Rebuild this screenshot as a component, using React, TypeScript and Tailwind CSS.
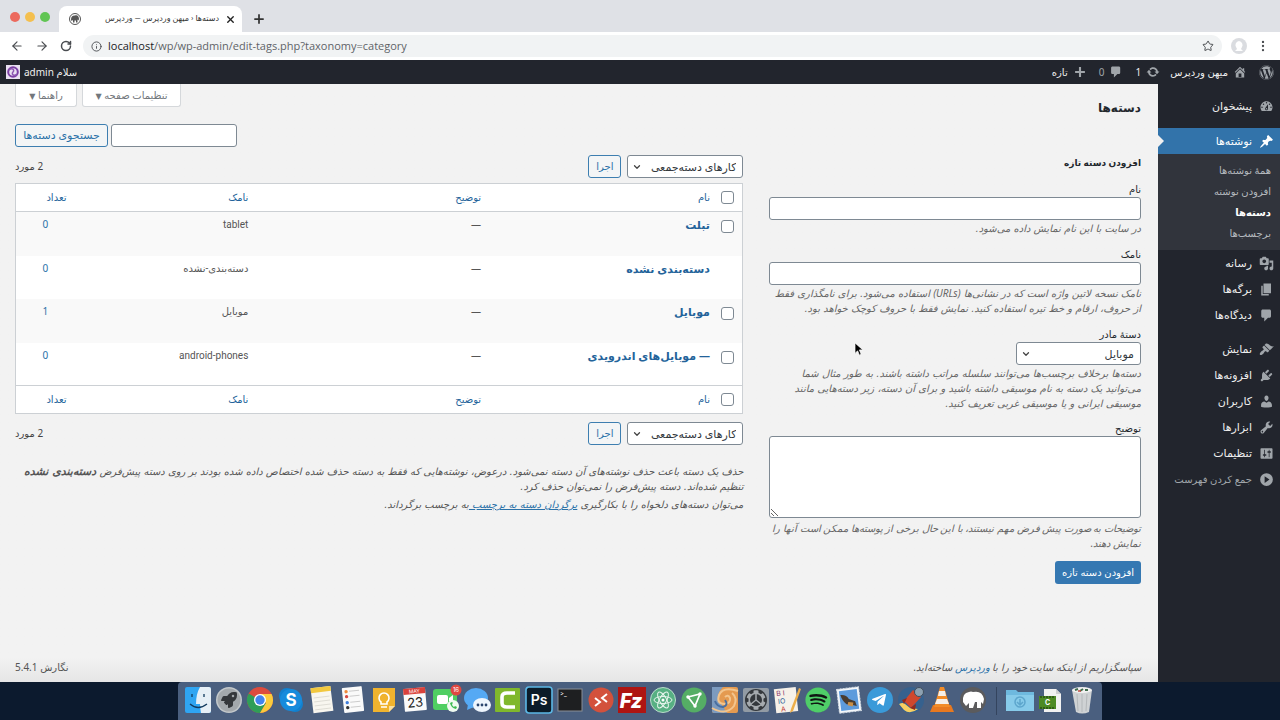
import React, { useState } from 'react';
import { ArrowLeft, ArrowRight, ChevronDown, Info, MoreVertical, Plus, RotateCw, Star, X } from 'lucide-react';
import { FaCog, FaRocket, FaSpotify, FaTelegramPlane, FaWordpress } from 'react-icons/fa';

const icons = {
  home: 'M16 8.5l1.53 1.53-1.06 1.06L10 4.6l-6.47 6.49-1.06-1.06L10 2.5l4 4v-2h2v4zm-6-2.46l6 5.99V18H4v-5.97zM12 17v-5H8v5h4z',
  update: 'M10.2 3.28c3.53 0 6.43 2.61 6.92 6h2.08l-3.5 4-3.5-4h2.32c-.45-1.97-2.21-3.45-4.32-3.45-1.45 0-2.73.71-3.54 1.78L4.95 5.66C6.23 4.2 8.11 3.28 10.2 3.28zm-.4 13.44c-3.52 0-6.43-2.61-6.92-6H.8l3.5-4c1.17 1.33 2.33 2.67 3.5 4H5.48c.45 1.97 2.21 3.45 4.32 3.45 1.45 0 2.73-.71 3.54-1.78l1.71 1.95c-1.28 1.46-3.15 2.38-5.25 2.38z',
  comments: 'M5 2h9c1.1 0 2 .9 2 2v7c0 1.1-.9 2-2 2h-2l-5 5v-5H5c-1.1 0-2-.9-2-2V4c0-1.1.9-2 2-2z',
  plus: 'M17 8.5v3h-5.5V17h-3v-5.500H3v-3h5.500V3h3v5.500H17z',
  dashboard: 'M3.76 16h12.48c1.1-1.37 1.76-3.11 1.76-5 0-4.42-3.58-8-8-8s-8 3.58-8 8c0 1.89.66 3.63 1.76 5zM10 4c.55 0 1 .45 1 1s-.45 1-1 1-1-.45-1-1 .45-1 1-1zM6 6c.55 0 1 .45 1 1s-.45 1-1 1-1-.45-1-1 .45-1 1-1zm8 0c.55 0 1 .45 1 1s-.45 1-1 1-1-.45-1-1 .45-1 1-1zm-5.370 5.550L12 7v6c0 1.1-.9 2-2 2s-2-.9-2-2c0-.57.24-1.080.63-1.450zM4 10c.55 0 1 .45 1 1s-.45 1-1 1-1-.45-1-1 .45-1 1-1zm12 0c.55 0 1 .45 1 1s-.45 1-1 1-1-.45-1-1 .45-1 1-1zm-5 3c0-.55-.45-1-1-1s-1 .45-1 1 .45 1 1 1 1-.45 1-1z',
  post: 'M10.44 3.02l1.82-1.82 6.36 6.35-1.83 1.82c-1.05-.68-2.48-.57-3.41.36l-.75.75c-.92.93-1.04 2.35-.35 3.41l-1.83 1.82-2.41-2.41-2.8 2.79c-.42.42-3.38 2.71-3.8 2.29s1.86-3.39 2.28-3.81l2.79-2.79L4.1 9.36l1.83-1.82c1.05.69 2.48.57 3.4-.36l.75-.75c.93-.92 1.05-2.35.36-3.41z',
  media: 'M13 11V4c0-.55-.45-1-1-1h-1.67L9 1H5L3.67 3H2c-.55 0-1 .45-1 1v7c0 .55.45 1 1 1h10c.55 0 1-.45 1-1zM7 4.5c1.38 0 2.5 1.12 2.5 2.5S8.38 9.5 7 9.5 4.5 8.38 4.5 7 5.62 4.5 7 4.5zM14 6h5v10.5c0 1.38-1.12 2.5-2.5 2.5S14 17.88 14 16.5s1.12-2.5 2.5-2.5c.17 0 .34.02.5.05V9h-3V6zm-4 8.05V13h2v3.5c0 1.38-1.12 2.5-2.5 2.5S7 17.88 7 16.5 8.12 14 9.5 14c.17 0 .34.02.5.05z',
  page: 'M6 15V2h10v13H6zm-1 1h8v2H3V5h2v11z',
  appearance: 'M14.48 11.06L7.41 3.99l1.5-1.5c.5-.56 2.3-.47 3.51.32 1.21.8 1.43 1.28 2.91 2.1 1.18.64 2.45 1.26 4.45.85zm-.71.71L6.7 4.7 4.93 6.47c-.39.39-.39 1.02 0 1.41l1.06 1.06c.39.39.39 1.03 0 1.42-.6.6-1.43 1.11-2.21 1.69-.35.26-.7.53-1.01.84C1.43 14.23.4 16.08 1.4 17.07c.99 1 2.84-.03 4.18-1.36.31-.31.58-.66.85-1.02.57-.78 1.08-1.61 1.69-2.21.39-.39 1.02-.39 1.41 0l1.06 1.06c.39.39 1.02.39 1.41 0z',
  plugins: 'M13.11 4.36L9.87 7.6 8 5.73l3.24-3.24c.35-.34 1.05-.2 1.56.32.52.51.66 1.21.31 1.55zm-8 1.77l.91-1.12 9.01 9.01-1.19.84c-.71.71-2.63 1.16-3.82 1.16H6.14L4.9 17.26c-.59.59-1.54.59-2.12 0-.59-.58-.59-1.53 0-2.12l1.24-1.24v-3.88c0-1.13.4-3.19 1.09-3.89zm7.26 3.97l3.24-3.24c.34-.35 1.04-.21 1.55.31.52.51.66 1.21.31 1.55l-3.24 3.25z',
  users: 'M10 9.25c-2.27 0-2.73-3.44-2.73-3.44C7 4.02 7.82 2 9.97 2c2.16 0 2.98 2.02 2.71 3.81 0 0-.41 3.44-2.68 3.44zm0 2.57L12.72 10c2.39 0 4.52 2.33 4.52 4.53v2.49s-3.65 1.13-7.24 1.13c-3.65 0-7.24-1.13-7.24-1.13v-2.49c0-2.25 1.94-4.48 4.47-4.48z',
  tools: 'M16.68 9.77c-1.34 1.34-3.3 1.67-4.95.99l-5.41 6.52c-.99.99-2.59.99-3.58 0s-.99-2.59 0-3.57l6.52-5.42c-.68-1.65-.35-3.61.99-4.95 1.28-1.28 3.12-1.62 4.72-1.06l-2.89 2.89 2.82 2.82 2.86-2.87c.53 1.58.18 3.39-1.08 4.65zM3.81 16.21c.4.39 1.04.39 1.43 0 .4-.4.4-1.04 0-1.43-.39-.4-1.03-.4-1.43 0-.39.39-.39 1.03 0 1.43z',
  settings: 'M18 16V4c0-.55-.45-1-1-1H3c-.55 0-1 .45-1 1v12c0 .55.45 1 1 1h14c.55 0 1-.45 1-1zM8 11h1c.55 0 1 .45 1 1s-.45 1-1 1H8v1.5c0 .28-.22.5-.5.5s-.5-.22-.5-.5V13H6c-.55 0-1-.45-1-1s.45-1 1-1h1V5.5c0-.28.22-.5.5-.5s.5.22.5.5V11zm5-2h-1c-.55 0-1-.45-1-1s.45-1 1-1h1V5.5c0-.28.22-.5.5-.5s.5.22.5.5V7h1c.55 0 1 .45 1 1s-.45 1-1 1h-1v5.5c0 .28-.22.5-.5.5s-.5-.22-.5-.5V9z',
  collapse: 'M10 1.500a8.500 8.500 0 1 0 0 17 8.500 8.500 0 0 0 0-17zM7.500 5.500L14 10l-6.500 4.500z',
};

type IconName = keyof typeof icons;

const Dashicon = ({ name, className = 'size-[15px]' }: { name: IconName; className?: string }) => (
  <svg viewBox="0 0 20 20" className={`shrink-0 fill-current ${className}`} aria-hidden="true">
    <path fillRule="evenodd" d={icons[name]} />
  </svg>
);

const MenuItem = ({ icon, label }: { icon: IconName; label: string }) => (
  <li>
    <a href="#" className="flex h-[26px] items-center gap-[7px] ps-[6px] text-[11px] text-[#eee]">
      <Dashicon name={icon} className="size-[15px] text-[#a0a5aa]" />
      {label}
    </a>
  </li>
);

const Sidebar = () => (
  <nav className="w-[122px] shrink-0 bg-[#22252d] pt-[9px]">
    <ul>
      <MenuItem icon="dashboard" label="پیشخوان" />
      <li className="mt-[9px]">
        <a href="#" className="relative flex h-[26px] items-center gap-[7px] bg-[#3273aa] ps-[6px] text-[11px] text-white">
          <Dashicon name="post" />
          نوشته‌ها
          <span className="absolute left-0 top-[7px] border-y-6 border-l-6 border-y-transparent border-l-[#f1f1f1]" />
        </a>
        <ul className="bg-[#31343c] py-[6px] text-[10px] text-[#b4b9be]">
          <li><a href="#" className="flex h-[21px] items-center ps-[9px]">همهٔ نوشته‌ها</a></li>
          <li><a href="#" className="flex h-[21px] items-center ps-[9px]">افزودن نوشته</a></li>
          <li><a href="#" className="flex h-[21px] items-center ps-[9px] font-bold text-white">دسته‌ها</a></li>
          <li><a href="#" className="flex h-[21px] items-center ps-[9px]">برچسب‌ها</a></li>
        </ul>
      </li>
      <MenuItem icon="media" label="رسانه" />
      <MenuItem icon="page" label="برگه‌ها" />
      <MenuItem icon="comments" label="دیدگاه‌ها" />
    </ul>
    <ul className="mt-2">
      <MenuItem icon="appearance" label="نمایش" />
      <MenuItem icon="plugins" label="افزونه‌ها" />
      <MenuItem icon="users" label="کاربران" />
      <MenuItem icon="tools" label="ابزارها" />
      <MenuItem icon="settings" label="تنظیمات" />
    </ul>
    <button type="button" className="flex h-[26px] items-center gap-[7px] ps-[6px] text-[10px] text-[#a0a5aa]">
      <Dashicon name="collapse" />
      جمع کردن فهرست
    </button>
  </nav>
);

const BrowserChrome = () => (
  <header dir="ltr" className="font-['Roboto','DejaVu_Sans',sans-serif]">
    <div className="flex h-8 items-end bg-[#dfe1e6] pl-[10px]">
      <div className="flex gap-[5px] pb-[10px]">
        <span className="size-[10px] rounded-full bg-[#ec6a5e]" />
        <span className="size-[10px] rounded-full bg-[#f4bf4f]" />
        <span className="size-[10px] rounded-full bg-[#61c554]" />
      </div>
      <div className="ml-[9px] flex h-[26px] w-[183px] items-center rounded-t-lg bg-white pl-[10px] pr-[6px]">
        <svg viewBox="0 0 24 24" className="size-3" aria-hidden="true">
          <circle cx="12" cy="12" r="11" fill="#fff" stroke="#555" strokeWidth="2" />
          <path fill="#555" d="M4 13c0-6 4-9 8-8 4-2 8 1 8 7l-1 3-2-2v6h-3v-4h-3v4H8v-5l-3 2z" />
        </svg>
        <span dir="rtl" className="flex-1 pr-[6px] text-[8px] text-[#333]">دسته‌ها ‹ میهن وردپرس — وردپرس</span>
        <button type="button" aria-label="Close tab"><X className="size-[11px] text-[#222]" strokeWidth={3} /></button>
      </div>
      <button type="button" aria-label="New tab" className="mb-[6px] ml-[10px]"><Plus className="size-[14px] text-[#333]" strokeWidth={3} /></button>
    </div>
    <div className="flex h-7 items-center bg-white pl-[10px] pr-[10px] text-[#4a4d51]">
      <button type="button" aria-label="Back"><ArrowLeft className="size-[14px]" /></button>
      <button type="button" aria-label="Forward" className="ml-[11px]"><ArrowRight className="size-[14px]" /></button>
      <button type="button" aria-label="Reload" className="ml-[11px]"><RotateCw className="size-[12px]" strokeWidth={3} /></button>
      <div className="ml-[11px] mr-[9px] flex h-[22px] flex-1 items-center rounded-full bg-[#f1f3f4] pl-2 pr-2 text-[11px]">
        <Info className="size-[11px]" />
        <span className="ml-[6px] flex-1 font-['Open_Sans',sans-serif] text-[#5f6368]">
          <span className="text-[#202124]">localhost</span>/wp/wp-admin/edit-tags.php?taxonomy=category
        </span>
        <Star className="size-[12px]" />
      </div>
      <span className="flex size-4 items-center justify-center overflow-hidden rounded-full bg-[#dadce0]">
        <svg viewBox="0 0 16 16" className="size-4" aria-hidden="true">
          <path fill="#fff" d="M8 3a4 4 0 0 1 3 6l-1 2 2 2H4l2-2-1-2a4 4 0 0 1 3-6z" />
        </svg>
      </span>
      <button type="button" aria-label="Menu" className="ml-[9px]"><MoreVertical className="size-[14px]" /></button>
    </div>
  </header>
);

const AdminBar = () => (
  <div className="flex h-6 items-center bg-[#22252d] px-[6px] text-[10px] text-[#eee]">
    <a href="#" aria-label="WordPress" className="text-[#a0a5aa]"><FaWordpress className="size-[15px]" /></a>
    <a href="#" className="ms-[12px] flex items-center gap-[5px]"><Dashicon name="home" className="size-[14px] text-[#a0a5aa]" />میهن وردپرس</a>
    <a href="#" className="ms-[10px] flex items-center gap-[5px]"><Dashicon name="update" className="size-[14px] text-[#a0a5aa]" />1</a>
    <a href="#" className="ms-[12px] flex items-center gap-[5px] text-[#a0a5aa]"><Dashicon name="comments" className="size-[14px]" />0</a>
    <a href="#" className="ms-[12px] flex items-center gap-[5px]"><Dashicon name="plus" className="size-[14px] text-[#a0a5aa]" />تازه</a>
    <a href="#" className="ms-auto flex items-center gap-1">
      سلام admin
      <svg viewBox="0 0 14 14" className="size-[14px]" aria-hidden="true">
        <rect width="14" height="14" fill="#e9dff2" />
        <circle cx="7" cy="7" r="4.800" fill="none" stroke="#7c3fa5" strokeWidth="2" />
        <path d="M3 5c3-3 6 0 4 2s1 5 4 2" fill="none" stroke="#8d56b3" strokeWidth="1.500" />
      </svg>
    </a>
  </div>
);

const categories = [
  { name: 'تبلت', slug: 'tablet', count: 0, check: true },
  { name: 'دسته‌بندی نشده', slug: 'دسته‌بندی-نشده', count: 0, check: false },
  { name: 'موبایل', slug: 'موبایل', count: 1, check: true },
  { name: '— موبایل‌های اندرویدی', slug: 'android-phones', count: 0, check: true },
];

const Check = ({ label }: { label: string }) => (
  <input type="checkbox" aria-label={label} className="block size-[13px] appearance-none rounded-[3px] border border-[#7e8993] bg-white checked:bg-[#007cba]" />
);

const HeadRow = () => (
  <tr className="h-7 text-[10px] text-[#23639a]">
    <td className="ps-2"><Check label="انتخاب همه" /></td>
    <th scope="col" className="px-2 text-start font-normal"><a href="#">نام</a></th>
    <th scope="col" className="px-2 text-start font-normal"><a href="#">توضیح</a></th>
    <th scope="col" className="px-2 text-start font-normal"><a href="#">نامک</a></th>
    <th scope="col" className="px-2 text-start font-normal"><a href="#">تعداد</a></th>
  </tr>
);

const TableNav = ({ id }: { id: string }) => (
  <div className="flex h-[23px] items-center gap-[6px] text-[10px]">
    <div className="relative">
      <select id={id} aria-label="کارهای دسته‌جمعی" className="block h-[23px] w-[116px] appearance-none rounded-[3px] border border-[#7e8993] bg-white ps-[6px] text-[11px] leading-[21px] text-[#32373c]">
        <option>کارهای دسته‌جمعی</option>
      </select>
      <ChevronDown className="pointer-events-none absolute left-[5px] top-[7px] size-[10px] text-[#444]" strokeWidth={3} />
    </div>
    <button type="button" className="h-[23px] w-[33px] rounded-[3px] border border-[#3d7eb0] bg-[#f3f5f6] text-[#2a71a8]">اجرا</button>
    <span className="ms-auto text-[#444]">2 مورد</span>
  </div>
);

const CategoryTable = () => (
  <section className="min-w-0 flex-1">
    <TableNav id="bulk-top" />
    <table className="mt-[5px] w-full table-fixed border-collapse border border-[#ccd0d4] bg-white">
      <colgroup>
        <col className="w-[25px]" />
        <col />
        <col className="w-[32%]" />
        <col className="w-[25%]" />
        <col className="w-[59px]" />
      </colgroup>
      <thead className="border-b border-[#ccd0d4]"><HeadRow /></thead>
      <tbody>
        {categories.map((c) => (
          <tr key={c.slug} className="h-[43px] align-top text-[10px] leading-[15px] text-[#555] odd:h-11 odd:bg-[#f9f9f9]">
            <td className="ps-2 pt-2">{c.check && <Check label={c.name} />}</td>
            <td className="px-2 pt-[5px] text-[11px] font-bold text-[#23639a]"><a href="#">{c.name}</a></td>
            <td className="px-2 pt-[5px]">—</td>
            <td className="px-2 pt-[5px] font-['Roboto','DejaVu_Sans',sans-serif]">{c.slug}</td>
            <td className="px-2 pt-[5px] text-center text-[#2a71a8]"><a href="#">{c.count}</a></td>
          </tr>
        ))}
      </tbody>
      <tfoot className="border-t border-[#ccd0d4]"><HeadRow /></tfoot>
    </table>
    <div className="mt-2"><TableNav id="bulk-bottom" /></div>
    <div className="mt-[19px] font-['DejaVu_Sans',sans-serif] text-[10px] italic leading-[15px] text-[#555]">
      <p>
        حذف یک دسته باعث حذف نوشته‌های آن دسته نمی‌شود. درعوض، نوشته‌هایی که فقط به دسته حذف شده اختصاص داده شده بودند بر روی دسته پیش‌فرض <strong className="text-[11px]">دسته‌بندی نشده</strong> تنظیم شده‌اند. دسته پیش‌فرض را نمی‌توان حذف کرد.
      </p>
      <p className="mt-[3px]">
        می‌توان دسته‌های دلخواه را با بکارگیری <a href="#" className="text-[#2a71a8] underline">برگردان دسته به برچسب </a>به برچسب برگرداند.
      </p>
    </div>
  </section>
);

const AddForm = () => {
  const [name, setName] = useState('');
  const [slug, setSlug] = useState('');
  const [description, setDescription] = useState('');

  return (
    <form className="w-[33%] shrink-0 text-[10px] leading-[15px] text-[#23282d]" onSubmit={(e) => e.preventDefault()}>
      <h2 className="text-[9px] font-bold">افزودن دسته تازه</h2>
      <div className="mt-[12px]">
        <label htmlFor="name" className="block">نام</label>
        <input id="name" value={name} onChange={(e) => setName(e.target.value)} className="block h-[23px] w-full rounded-[3px] border border-[#7e8993] bg-white px-2" />
        <p className="mt-px font-['DejaVu_Sans',sans-serif] italic text-[#666]">در سایت با این نام نمایش داده می‌شود.</p>
      </div>
      <div className="mt-[11px]">
        <label htmlFor="slug" className="block">نامک</label>
        <input id="slug" value={slug} onChange={(e) => setSlug(e.target.value)} className="block h-[23px] w-full rounded-[3px] border border-[#7e8993] bg-white px-2" />
        <p className="mt-px font-['DejaVu_Sans',sans-serif] italic text-[#666]">
          نامک نسخه لاتین واژه است که در نشانی‌ها <span className="font-['Noto_Sans',sans-serif]">(URLs)</span> استفاده می‌شود. برای نامگذاری فقط از حروف، ارقام و خط تیره استفاده کنید. نمایش فقط با حروف کوچک خواهد بود.
        </p>
      </div>
      <div className="mt-[11px]">
        <label htmlFor="parent" className="block">دستهٔ مادر</label>
        <div className="relative w-[125px]">
          <select id="parent" className="block h-[23px] w-full appearance-none rounded-[3px] border border-[#7e8993] bg-white ps-[6px] text-[11px] leading-[21px] text-[#32373c]">
            <option>موبایل</option>
          </select>
          <ChevronDown className="pointer-events-none absolute left-[5px] top-[7px] size-[10px] text-[#444]" strokeWidth={3} />
        </div>
        <p className="mt-px font-['DejaVu_Sans',sans-serif] italic text-[#666]">
          دسته‌ها برخلاف برچسب‌ها می‌توانند سلسله مراتب داشته باشند. به طور مثال شما می‌توانید یک دسته به نام موسیقی داشته باشید و برای آن دسته، زیر دسته‌هایی مانند موسیقی ایرانی و یا موسیقی غربی تعریف کنید.
        </p>
      </div>
      <div className="mt-[10px]">
        <label htmlFor="description" className="block">توضیح</label>
        <textarea id="description" value={description} onChange={(e) => setDescription(e.target.value)} className="block h-[82px] w-full rounded-[3px] border border-[#7e8993] bg-white px-2" />
        <p className="mt-[3px] italic text-[#666]">
          توضیحات به صورت پیش فرض مهم نیستند، با این حال برخی از پوسته‌ها ممکن است آنها را نمایش دهند.
        </p>
      </div>
      <button type="submit" className="mt-[10px] h-[23px] w-[86px] rounded-[3px] bg-[#3578b2] text-white">افزودن دسته تازه</button>
    </form>
  );
};

const DockIcon = ({ label, children }: { label: string; children: React.ReactNode }) => (
  <button type="button" aria-label={label} className="size-[26px] shrink-0">
    <svg viewBox="0 0 26 26" className="size-[26px] overflow-visible">{children}</svg>
  </button>
);

const Dock = () => (
  <footer dir="ltr" className="flex h-[38px] justify-center bg-[#0c1a2e]">
    <div className="flex items-start gap-[5px] rounded-t bg-[#4a5f7f] px-[7px] pt-[5px] font-['Inter',sans-serif]">
      <DockIcon label="Finder">
        <rect width="26" height="26" rx="2" fill="#2fa5f2" />
        <path d="M15 0h9q2 0 2 2v22q0 2-2 2h-8q-1-5-1-9h-4Q11 7 15 0z" fill="#e6eff6" />
        <path d="M5 17q8 7 17 0M7 7v3M19 7v3" stroke="#123a5e" strokeWidth="1.300" fill="none" />
      </DockIcon>
      <DockIcon label="Launchpad">
        <circle cx="13" cy="13" r="13" fill="#c3c8cb" />
        <circle cx="13" cy="13" r="11.500" fill="#a3a8ac" />
        <FaRocket x="5" y="5" size={16} color="#34373b" />
      </DockIcon>
      <DockIcon label="Chrome">
        <circle cx="13" cy="13" r="13" fill="#dc4b3e" />
        <path d="M13 13L1.700 6.500A13 13 0 0 0 13 26l6-10z" fill="#2f9e58" />
        <path d="M13 7h11.600A13 13 0 0 1 13 26l6-10z" fill="#fbcb3c" />
        <circle cx="13" cy="13" r="6" fill="#fff" />
        <circle cx="13" cy="13" r="4.700" fill="#4384ee" />
      </DockIcon>
      <DockIcon label="Skype">
        <circle cx="9" cy="9" r="8" fill="#1180cf" />
        <circle cx="17" cy="17" r="8" fill="#1180cf" />
        <circle cx="13" cy="13" r="11" fill="#168bdc" />
        <text x="13" y="19" textAnchor="middle" fontSize="17" fontWeight="700" fill="#fff">S</text>
      </DockIcon>
      <DockIcon label="Notes">
        <g transform="rotate(-7 13 13)">
          <rect x="3" width="20" height="25" fill="#f8f6ef" />
          <rect x="3" width="20" height="5" fill="#f2c83f" />
          <path d="M5 10h16M5 14h16M5 18h16M5 22h16" stroke="#d5d3cb" strokeWidth=".7" />
        </g>
      </DockIcon>
      <DockIcon label="Reminders">
        <g transform="rotate(-6 13 13)">
          <rect x="3" width="20" height="25" rx="1" fill="#fafafa" />
          <path d="M10 4h10M10 9h10M10 15h10M10 20h10" stroke="#ccc" />
          <circle cx="7" cy="4" r="1.700" fill="#ef8a3a" />
          <circle cx="7" cy="9" r="1.700" fill="#d84a43" />
          <circle cx="7" cy="15" r="1.700" fill="#3f7edc" />
          <circle cx="7" cy="20" r="1.700" fill="#333" />
        </g>
      </DockIcon>
      <DockIcon label="Keep">
        <path d="M2 1h22v18l-6 6H2z" fill="#f0b32e" />
        <path d="M24 19h-6v6z" fill="#fbe0a0" />
        <path d="M10 17v-2a5 5 0 1 1 6 0v2zM10 20h6" fill="none" stroke="#fff" strokeWidth="1.600" />
      </DockIcon>
      <DockIcon label="Calendar">
        <g transform="rotate(-5 13 13)">
          <rect x="2" y="1" width="22" height="23" rx="1" fill="#fafafa" />
          <rect x="2" y="1" width="22" height="6" fill="#d9413b" />
          <text x="13" y="6" textAnchor="middle" fontSize="5" fill="#fff">MAY</text>
          <text x="13" y="20" textAnchor="middle" fontSize="13" fill="#222">23</text>
        </g>
      </DockIcon>
      <DockIcon label="FaceTime">
        <rect y="2" width="24" height="21" rx="3" fill="#4fcf62" />
        <rect x="4" y="8" width="11" height="9" rx="2" fill="#fff" />
        <path d="M16 11l4-3v9l-4-3z" fill="#fff" />
        <circle cx="20" cy="19" r="6" fill="#effaf0" />
        <path d="M17 16q1 5 6 6l1-2-2-1-1 1q-2-1-2-3l1-1-1-1z" fill="#3cba51" />
        <circle cx="23" cy="3" r="5.500" fill="#df4841" />
        <text x="23" y="5" textAnchor="middle" fontSize="6" fill="#fff">16</text>
      </DockIcon>
      <DockIcon label="Messages">
        <ellipse cx="12" cy="11" rx="12" ry="10" fill="#55a9f4" />
        <path d="M4 17l-1 6 7-3z" fill="#55a9f4" />
        <ellipse cx="18" cy="18" rx="9" ry="7" fill="#eef5fd" />
        <circle cx="14" cy="18" r="1.400" fill="#2b456e" />
        <circle cx="18" cy="18" r="1.400" fill="#2b456e" />
        <circle cx="22" cy="18" r="1.400" fill="#2b456e" />
      </DockIcon>
      <DockIcon label="Camtasia">
        <rect y="1" width="25" height="24" rx="1" fill="#80b82c" />
        <path d="M20 6h-8q-5 0-5 4v6q0 4 5 4h8" fill="none" stroke="#fff" strokeWidth="3.600" />
      </DockIcon>
      <DockIcon label="Photoshop">
        <rect x="0" y="0" width="26" height="26" rx="3" fill="#0c1c29" stroke="#5cb8e6" strokeWidth="1.600" />
        <text x="13" y="18" textAnchor="middle" fontSize="14" fontWeight="600" fill="#fff">Ps</text>
      </DockIcon>
      <DockIcon label="Terminal">
        <rect x="1" y="2" width="24" height="22" fill="#1e1f21" stroke="#8a8f96" />
        <text x="3" y="9" fontSize="6" fill="#fff">&gt;_</text>
      </DockIcon>
      <DockIcon label="Remote Desktop">
        <circle cx="13" cy="13" r="12.500" fill="#d3513c" />
        <path d="M7 11l5 4-5 4M19 7l-5 4 5 4" fill="none" stroke="#fff" strokeWidth="2" />
      </DockIcon>
      <DockIcon label="FileZilla">
        <rect x="-1" width="28" height="26" fill="#ae1512" />
        <text x="12" y="21" textAnchor="middle" fontSize="20" fontStyle="italic" fontWeight="800" fill="#fff">Fz</text>
      </DockIcon>
      <DockIcon label="Atom">
        <circle cx="13" cy="13" r="12.500" fill="#57b083" stroke="#b9dccb" />
        <g fill="none" stroke="#e8f5ee">
          <ellipse cx="13" cy="13" rx="9" ry="3.500" />
          <ellipse cx="13" cy="13" rx="9" ry="3.500" transform="rotate(60 13 13)" />
          <ellipse cx="13" cy="13" rx="9" ry="3.500" transform="rotate(120 13 13)" />
        </g>
        <circle cx="13" cy="13" r="1.500" fill="#fff" />
      </DockIcon>
      <DockIcon label="Maps">
        <circle cx="13" cy="13" r="12.500" fill="#55ad65" />
        <path d="M7 10l12-3-5 12z" fill="none" stroke="#fff" strokeWidth="1.700" />
        <circle cx="7" cy="10" r="1.700" fill="#fff" />
        <circle cx="19" cy="7" r="1.700" fill="#fff" />
        <circle cx="14" cy="19" r="1.700" fill="#fff" />
      </DockIcon>
      <DockIcon label="Swirl">
        <rect width="26" height="26" rx="2" fill="#e49a50" />
        <path d="M0 0h11Q2 9 10 18l5 8H2q-2 0-2-2z" fill="#7d9bbf" />
        <path d="M26 4Q11-1 7 8q-3 9 6 9 6-1 5-6-2-4-5-1M0 21q14 8 22-2 4-8-2-13" fill="none" stroke="#f2c58e" strokeWidth="2" />
        <path d="M13 13q4 5-2 7-6 0-8-6" fill="none" stroke="#496e9f" strokeWidth="2" />
      </DockIcon>
      <DockIcon label="System Preferences">
        <rect y="1" width="26" height="24" rx="2" fill="#929ba4" />
        <circle cx="13" cy="13" r="11" fill="#34383c" />
        <FaCog x="3" y="3" size={20} color="#a6abaf" />
        <circle cx="13" cy="13" r="6" fill="#34383c" />
        <path d="M13 13V7M13 13l5 4M13 13l-5 4" stroke="#a6abaf" strokeWidth="1.500" />
      </DockIcon>
      <DockIcon label="Text editor">
        <g transform="rotate(-6 13 13)">
          <rect x="1" y="1" width="22" height="24" fill="#f6f1e9" />
          <text x="3" y="8" fontSize="7" fill="#8b3f6e">B I</text>
          <text x="4" y="16" fontSize="7" fill="#35669b">IO</text>
          <text x="6" y="24" fontSize="7" fill="#c43d38">A</text>
        </g>
        <path d="M25 1l2 1-8 22-3 2 1-4z" fill="#edae4a" />
      </DockIcon>
      <DockIcon label="Spotify">
        <circle cx="13" cy="13" r="12" fill="#101512" />
        <FaSpotify size={26} color="#4fce68" />
      </DockIcon>
      <DockIcon label="Mail">
        <g transform="rotate(-7 13 13)">
          <rect x="2" y="1" width="22" height="24" fill="#f4f7fa" stroke="#d5dde5" strokeDasharray="2 1" />
          <rect x="4" y="3" width="18" height="20" fill="#5d9bdc" />
          <path d="M5 7q6 0 8 5l6 3 1 5-5-2-5-1q-4-4-5-10z" fill="#493c30" />
          <path d="M12 15l5 1-1 4-5-2z" fill="#c98f46" />
        </g>
      </DockIcon>
      <DockIcon label="Telegram">
        <circle cx="13" cy="13" r="13" fill="#3a9ad9" />
        <FaTelegramPlane x="4" y="5" size={16} color="#fff" />
      </DockIcon>
      <DockIcon label="Transmit">
        <circle cx="13" cy="13" r="13" fill="#36618e" />
        <path d="M1 17q4-2 6 0l5 4 8 1q-8 6-14 1z" fill="#f7cf62" />
        <path d="M15 3l8 7-10 11-7-7z" fill="#d0472d" />
        <path d="M4 13l5-2-3 6zM12 21l6-4-1 6z" fill="#93291d" />
        <circle cx="21" cy="5" r="4.500" fill="#8da1b1" stroke="#404e5c" />
      </DockIcon>
      <DockIcon label="VLC">
        <path d="M4 18h18l3 7H1z" fill="#e8791f" />
        <path d="M11 0h4l6 20H5z" fill="#f28c28" />
        <path d="M10 4h6l1 5H9zM8 12h10l2 5H6z" fill="#f5efe8" />
      </DockIcon>
      <DockIcon label="MAMP">
        <circle cx="13" cy="13" r="13" fill="#5b5b5d" />
        <path d="M3 15Q2 6 9 5q2-1 4 0 9-2 11 7l-1 5-2-2v6h-4v-6h-2l-2 6H9v-5l-3 3z" fill="#fff" />
      </DockIcon>
      <span className="mx-[5px] h-7 w-px bg-[#34445e]" />
      <DockIcon label="Downloads">
        <path d="M-1 3h10l2 2h16v19H-1z" fill="#6eb9df" />
        <path d="M-1 8h28v16H-1z" fill="#87cbea" />
        <circle cx="13" cy="15" r="5" fill="none" stroke="#5da6cd" strokeWidth="1.500" />
        <path d="M13 12v6M10 15l3 3 3-3" stroke="#5da6cd" strokeWidth="1.500" fill="none" />
      </DockIcon>
      <DockIcon label="Recording">
        <path d="M6 2h12l5 5v18H6z" fill="#f1f1f1" />
        <path d="M18 2v5h5z" fill="#cfcfcf" />
        <rect x="1" y="9" width="17" height="13" fill="#4d8a24" />
        <path d="M2 10h15M2 21h15" stroke="#16300a" strokeDasharray="2 1" />
        <text x="9.500" y="18" textAnchor="middle" fontSize="7" fontWeight="700" fill="#fff">C</text>
      </DockIcon>
      <DockIcon label="Trash">
        <path d="M3 3h20l-3 22q-7 3-13 0z" fill="#cfd2d4" />
        <path d="M8 7l1 17M13 7v18M18 7l-1 17" stroke="#b4b8ba" />
        <ellipse cx="13" cy="3" rx="10" ry="3" fill="#f1f1f1" />
        <path d="M6 3l3-1M11 4l3-2M16 3h3" stroke="#3f6d4d" strokeWidth="2" />
        <path d="M9 4h3" stroke="#c04b41" strokeWidth="1.500" />
      </DockIcon>
    </div>
  </footer>
);

const App: React.FC = () => {
  const [term, setTerm] = useState('');

  return (
    <div dir="rtl" lang="fa" className="flex min-h-screen flex-col bg-[#f1f1f1] font-['Noto_Sans','DejaVu_Sans',sans-serif]">
      <BrowserChrome />
      <AdminBar />
      <div className="flex flex-1">
        <Sidebar />
        <main className="relative flex min-w-0 flex-1 flex-col bg-linear-to-t from-[#e6e6e6] via-[#f2f2f2] via-[24px] to-[#f2f2f2] pe-[15px] ps-[17px]">
          <div className="flex items-start justify-between">
            <h1 className="pt-[14px] text-[12px] font-bold leading-5 text-[#23282d]">دسته‌ها</h1>
            <div>
              <div className="flex justify-end gap-[5px] text-[10px] text-[#72777c]">
                <button type="button" className="h-[23px] w-[99px] rounded-b-[3px] border border-t-0 border-[#d5d8db] bg-white">تنظیمات صفحه <span className="text-[8px]">▼</span></button>
                <button type="button" className="h-[23px] w-[62px] rounded-b-[3px] border border-t-0 border-[#d5d8db] bg-white">راهنما <span className="text-[8px]">▼</span></button>
              </div>
              <form className="mt-[17px] flex justify-end gap-[3px] text-[10px]" onSubmit={(e) => e.preventDefault()}>
                <input id="search" type="search" aria-label="جستجوی دسته‌ها" value={term} onChange={(e) => setTerm(e.target.value)} className="h-[23px] w-[126px] rounded-[3px] border border-[#7e8993] bg-white px-2" />
                <button type="submit" className="h-[23px] w-[93px] rounded-[3px] border border-[#3d7eb0] bg-[#f3f5f6] text-[11px] text-[#2a71a8]">جستجوی دسته‌ها</button>
              </form>
            </div>
          </div>
          <div className="mt-2 flex gap-[26px]">
            <AddForm />
            <CategoryTable />
          </div>
          <div className="mt-auto flex justify-between pb-[7px] text-[10px] leading-[15px] text-[#555]">
            <p className="italic">سپاسگزاریم از اینکه سایت خود را با <a href="#" className="text-[#2a71a8]">وردپرس</a> ساخته‌اید.</p>
            <p>نگارش 5.4.1</p>
          </div>
          <svg viewBox="0 0 10 16" className="absolute left-[854px] top-[258px] h-[14px] w-[9px]" aria-hidden="true">
            <path d="M1 1v12l3-3 2 5 2-1-2-5h4z" fill="#000" stroke="#fff" strokeWidth=".8" />
          </svg>
        </main>
      </div>
      <Dock />
    </div>
  );
};

export default App;
